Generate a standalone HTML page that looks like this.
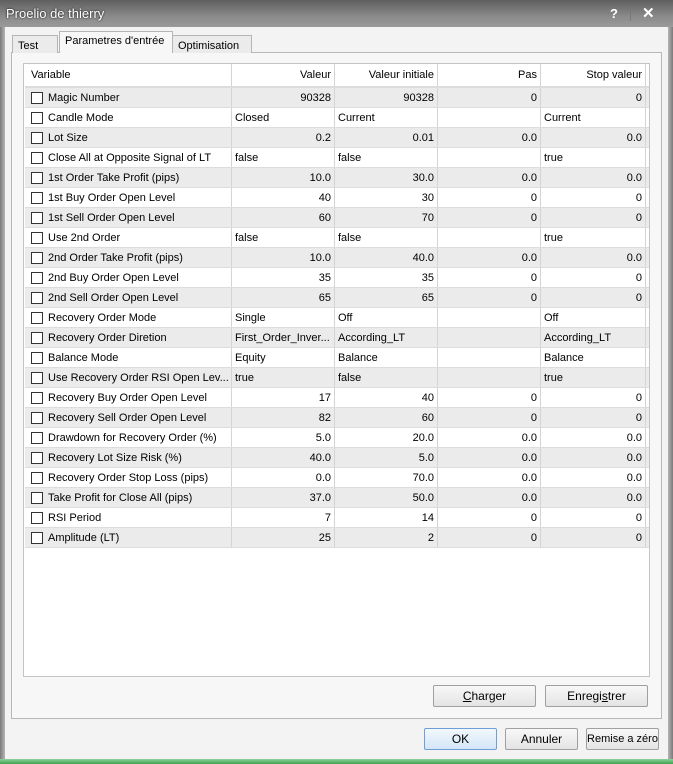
<!DOCTYPE html>
<html><head><meta charset="utf-8"><style>
*{margin:0;padding:0;box-sizing:border-box}
body{width:673px;height:764px;position:relative;overflow:hidden;font-family:"Liberation Sans",sans-serif;font-size:11px;color:#000;background:#f3f3f3}
.abs{position:absolute}
#title{left:0;top:0;width:673px;height:27px;background:linear-gradient(#5f5f5f,#8a8a8a 60%,#9a9a9a);color:#fff;font-size:13px;padding:6px 0 0 6px;text-shadow:0 0 2px #000}
#frameL{left:0;top:27px;width:5px;height:737px;background:linear-gradient(90deg,#7a7a7a,#b5b5b5)}
#frameR{right:0;top:27px;width:5px;height:737px;background:linear-gradient(90deg,#b5b5b5,#7a7a7a)}
#frameB{left:0;top:759px;width:673px;height:5px;background:linear-gradient(#8fd29a,#3ea24f)}
.tab{height:21px;border:1px solid #b5b5b5;border-bottom:none;background:#ebebeb;padding:4px 5px 0;font-size:11px}
#panel{left:11px;top:52px;width:651px;height:667px;border:1px solid #b8b8b8;background:#f7f7f7}
#list{left:23px;top:63px;width:627px;height:614px;border:1px solid #c4c4c4;background:#fff}
.row{position:absolute;left:1px;width:624px;height:20px;border-bottom:1px solid #dcdcdc}
.g{background:#ebebeb}
.c{position:absolute;top:0;height:19px;line-height:21px;border-right:1px solid #d4d4d4;padding:0 3px;white-space:nowrap;overflow:hidden}
.r{text-align:right}
.cb{position:absolute;left:6px;top:4px;width:12px;height:12px;border:1px solid #333;background:#fff}
.btn{position:absolute;height:22px;border:1px solid #a0a0a0;border-radius:2px;background:linear-gradient(#f8f8f8,#e4e4e4);text-align:center;line-height:20px;font-size:12px;white-space:nowrap}
</style></head><body>
<div class="abs" id="title">Proelio de thierry</div>
<div class="abs" style="left:610px;top:6px;color:#fff;font-weight:bold;font-size:13px">?</div>
<div class="abs" style="left:630px;top:7px;width:1px;height:14px;background:#777"></div>
<div class="abs" style="left:642px;top:4px;color:#fff;font-weight:bold;font-size:15px">✕</div>
<div class="abs" id="frameL"></div><div class="abs" id="frameR"></div><div class="abs" id="frameB"></div>
<div class="abs" id="panel"></div>
<div class="abs tab" style="left:12px;top:35px;width:46px;height:18px">Test</div>
<div class="abs tab" style="left:172px;top:35px;width:80px;height:18px">Optimisation</div>
<div class="abs tab" style="left:59px;top:31px;width:114px;height:22px;background:#f7f7f7;padding-top:3px">Parametres d'entrée</div>
<div class="abs" id="list">
<div class="row" style="top:0;height:24px;border-bottom:2px solid #dcdcdc">
<div class="c" style="left:0;width:207px;height:22px;line-height:22px;padding-left:6px">Variable</div>
<div class="c r" style="left:207px;width:103px;height:22px;line-height:22px">Valeur</div>
<div class="c r" style="left:310px;width:103px;height:22px;line-height:22px">Valeur initiale</div>
<div class="c r" style="left:413px;width:103px;height:22px;line-height:22px">Pas</div>
<div class="c r" style="left:516px;width:105px;height:22px;line-height:22px">Stop valeur</div>
</div>
<div id="rows"></div>
</div>
<script>
var d=[["Magic Number","90328","90328","0","0",1],["Candle Mode","Closed","Current","","Current",0],["Lot Size","0.2","0.01","0.0","0.0",1],["Close All at Opposite Signal of LT","false","false","","true",0],["1st Order Take Profit (pips)","10.0","30.0","0.0","0.0",1],["1st Buy Order Open Level","40","30","0","0",1],["1st Sell Order Open Level","60","70","0","0",1],["Use 2nd Order","false","false","","true",0],["2nd Order Take Profit (pips)","10.0","40.0","0.0","0.0",1],["2nd Buy Order Open Level","35","35","0","0",1],["2nd Sell Order Open Level","65","65","0","0",1],["Recovery Order Mode","Single","Off","","Off",0],["Recovery Order Diretion","First_Order_Inver...","According_LT","","According_LT",0],["Balance Mode","Equity","Balance","","Balance",0],["Use Recovery Order RSI Open Lev...","true","false","","true",0],["Recovery Buy Order Open Level","17","40","0","0",1],["Recovery Sell Order Open Level","82","60","0","0",1],["Drawdown for Recovery Order (%)","5.0","20.0","0.0","0.0",1],["Recovery Lot Size Risk (%)","40.0","5.0","0.0","0.0",1],["Recovery Order Stop Loss (pips)","0.0","70.0","0.0","0.0",1],["Take Profit for Close All (pips)","37.0","50.0","0.0","0.0",1],["RSI Period","7","14","0","0",1],["Amplitude (LT)","25","2","0","0",1]];
var h="";d.forEach(function(r,i){var a=r[5]?" r":"";
h+='<div class="row'+(i%2==0?' g':'')+'" style="top:'+(24+i*20)+'px"><div class="cb"></div>'+
'<div class="c" style="left:0;width:207px;padding-left:23px">'+r[0]+'</div>'+
'<div class="c'+a+'" style="left:207px;width:103px">'+r[1]+'</div>'+
'<div class="c'+a+'" style="left:310px;width:103px">'+r[2]+'</div>'+
'<div class="c r" style="left:413px;width:103px">'+r[3]+'</div>'+
'<div class="c'+a+'" style="left:516px;width:105px">'+r[4]+'</div></div>';});
document.getElementById("rows").innerHTML=h;
</script>
<div class="btn" style="left:433px;top:685px;width:103px"><u>C</u>harger</div>
<div class="btn" style="left:545px;top:685px;width:103px">Enregi<u>s</u>trer</div>
<div class="btn" style="left:424px;top:728px;width:73px;border-color:#6f9fd8;background:linear-gradient(#f2f8fd,#d4e6f7)">OK</div>
<div class="btn" style="left:505px;top:728px;width:73px">Annuler</div>
<div class="btn" style="left:586px;top:728px;width:73px;font-size:11px">Remise a zéro</div>
</body></html>
